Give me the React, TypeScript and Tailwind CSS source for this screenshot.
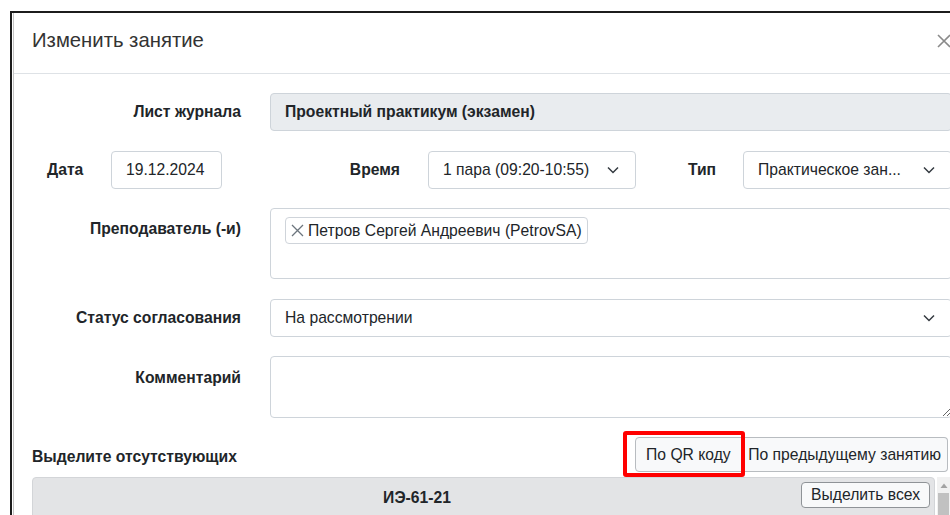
import React from 'react';

const font = { fontFamily: '"Liberation Sans", Arial, sans-serif' };

function Chevron() {
  return (
    <svg width="12" height="8" viewBox="0 0 12 8" className="shrink-0">
      <polyline points="1,1.5 6,6.5 11,1.5" fill="none" stroke="#343a40" strokeWidth="1.5" />
    </svg>
  );
}

function SelectBox({ value, className = '' }: { value: string; className?: string }) {
  return (
    <div
      className={
        'flex h-[38px] items-center justify-between rounded border border-[#ced4da] bg-white pl-[14px] pr-[16px] text-[15.7px] text-[#212529] ' +
        className
      }
    >
      <span className="truncate">{value}</span>
      <Chevron />
    </div>
  );
}

function Label({ children, className = '' }: { children: React.ReactNode; className?: string }) {
  return <div className={'text-[15.7px] font-bold text-[#212529] ' + className}>{children}</div>;
}

export default function App() {
  return (
    <div className="h-[515px] w-[950px] overflow-hidden bg-white pl-[10px] pt-[11px]" style={font}>
      <div className="w-[948px] border-l-2 border-t-2 border-[#1c1c1c] pl-px">
        <div className="border-l border-[#c4c4c4]">
          {/* header */}
          <div className="flex h-[61px] items-start justify-between border-b border-[#dee2e6] pl-[18px] pr-[7px] pt-[15px]">
            <h5 className="text-[20.3px] leading-[24px] text-[#333]">Изменить занятие</h5>
            <svg width="14" height="14" viewBox="0 0 14 14" className="mt-[6px]">
              <path d="M1 1 L13 13 M13 1 L1 13" stroke="#8a8a8a" strokeWidth="1.6" />
            </svg>
          </div>

          {/* body */}
          <div className="flex flex-col pl-[18px] pr-[6px] pt-[19px]">
            <div className="flex items-center">
              <Label className="w-[209px] text-right">Лист журнала</Label>
              <div className="ml-[29px] flex h-[38px] flex-1 items-center rounded border border-[#ced4da] bg-[#e9ecef] pl-[14px] text-[15.7px] font-bold text-[#212529]">
                Проектный практикум (экзамен)
              </div>
            </div>

            <div className="mt-[20px] flex items-center">
              <Label className="w-[79px] pl-[15px]">Дата</Label>
              <div className="flex h-[38px] w-[111px] items-center rounded border border-[#ced4da] pl-[14px] text-[15.7px] text-[#212529]">
                19.12.2024
              </div>
              <Label className="w-[206px] pr-[28px] text-right">Время</Label>
              <SelectBox value="1 пара (09:20-10:55)" className="w-[208px]" />
              <Label className="w-[107px] pr-[27px] text-right">Тип</Label>
              <SelectBox value="Практическое зан..." className="w-[209px]" />
            </div>

            <div className="mt-[19px] flex items-start">
              <Label className="w-[209px] pt-[9px] text-right">Преподаватель (-и)</Label>
              <div className="ml-[29px] h-[71px] flex-1 rounded border border-[#ced4da] pl-[14px] pt-[8px]">
                <span className="inline-flex h-[27px] items-center gap-[3px] rounded border border-[#cfd4da] bg-white pl-[4px] pr-[5px] text-[15.7px] text-[#212529]">
                  <svg width="15" height="15" viewBox="0 0 15 15">
                    <path d="M2 2 L13 13 M13 2 L2 13" stroke="#6c757d" strokeWidth="1.3" />
                  </svg>
                  Петров Сергей Андреевич (PetrovSA)
                </span>
              </div>
            </div>

            <div className="mt-[20px] flex items-center">
              <Label className="w-[209px] text-right">Статус согласования</Label>
              <SelectBox value="На рассмотрении" className="ml-[29px] flex-1" />
            </div>

            <div className="mt-[19px] flex items-start">
              <Label className="w-[209px] pt-[10px] text-right">Комментарий</Label>
              <textarea className="ml-[29px] h-[62px] flex-1 rounded border border-[#ced4da] outline-none" />
            </div>

            <div className="mt-[19px] flex items-center justify-between pr-[4px]">
              <Label className="pt-[5px]">Выделите отсутствующих</Label>
              <div className="flex">
                <div className="relative">
                  <button className="h-[35px] rounded-l border border-[#b8bcc0] bg-[#f8f9fa] px-[10.5px] text-[15.7px] text-[#212529]">
                    По QR коду
                  </button>
                  <div className="pointer-events-none absolute -bottom-[5px] -left-[12px] -right-[3px] -top-[6px] rounded-[3px] border-4 border-[#ff0000]" />
                </div>
                <button className="h-[35px] rounded-r border border-l-0 border-[#b8bcc0] bg-[#f8f9fa] px-[6px] text-[15.7px] text-[#212529]">
                  По предыдущему занятию
                </button>
              </div>
            </div>

            <div className="mt-[5px] flex pr-[2px]">
              <div className="flex h-[40px] flex-1 items-start rounded-t border border-[#d3d5d8] bg-[#e3e4e6] pt-[4px]">
                <div className="flex-1 pt-[4px] text-center text-[15.7px] font-bold text-[#212529]">ИЭ-61-21</div>
                <button className="mr-[4px] h-[26px] rounded border border-[#8f9397] bg-[#f8f9fa] px-[9px] text-[15.7px] text-[#212529]">
                  Выделить всех
                </button>
              </div>
              <div className="ml-[2px] flex w-[13px] flex-col items-center bg-[#f1f1f1]">
                <svg width="8" height="6" viewBox="0 0 8 6" className="mt-[6px]">
                  <polygon points="4,0.5 7.5,5 0.5,5" fill="#a3a3a3" />
                </svg>
                <div className="mt-[4px] h-[30px] w-[11px] bg-[#c1c1c1]" />
              </div>
            </div>
          </div>
        </div>
      </div>
    </div>
  );
}
